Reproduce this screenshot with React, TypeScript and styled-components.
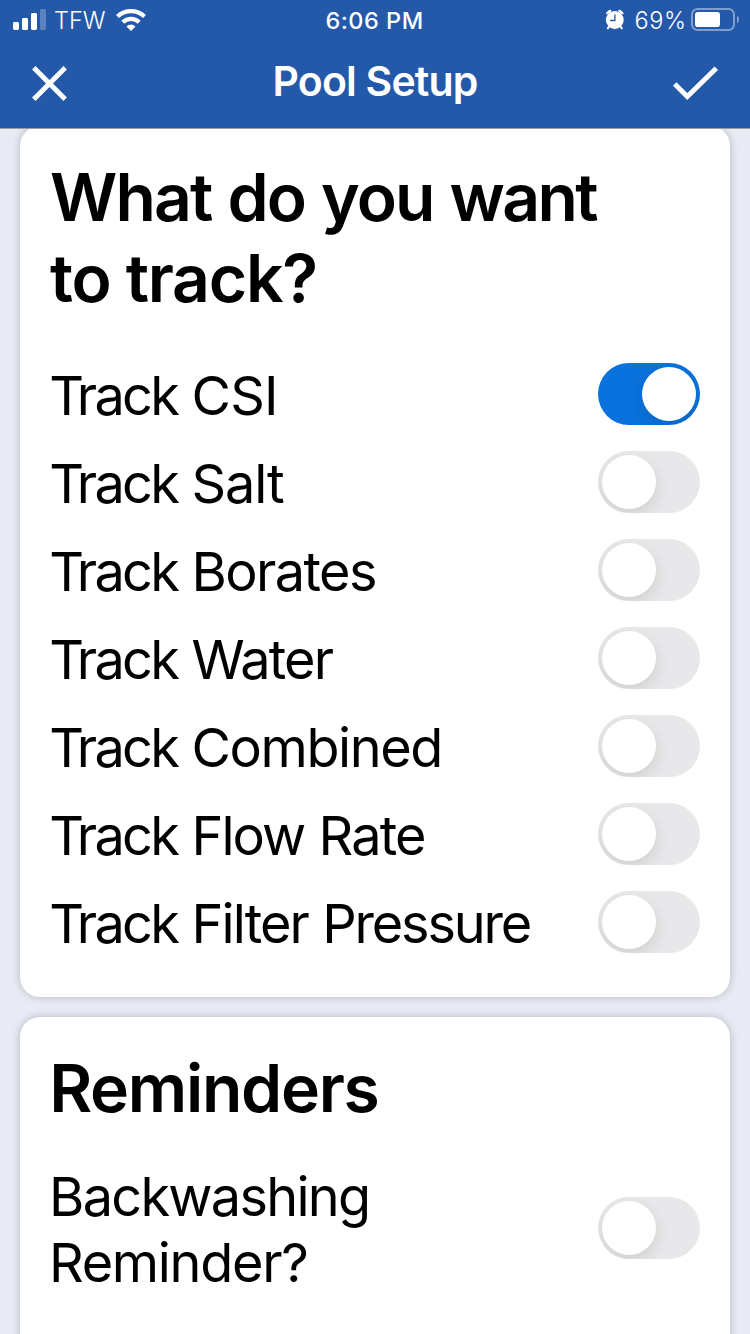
import React from 'react';
import styled, { createGlobalStyle } from 'styled-components';

const GlobalStyle = createGlobalStyle`
  * { box-sizing: border-box; }
  html, body { margin: 0; padding: 0; }
  body {
    background: #e8ebf4;
    font-family: Inter, "Liberation Sans", sans-serif;
    color: #000;
  }
`;

const Screen = styled.div`
  width: 750px;
  height: 1334px;
  overflow: hidden;
  display: flex;
  flex-direction: column;
  background: #e8ebf4;
`;

const Header = styled.header`
  flex: none;
  height: 129px;
  background: #2459aa;
  border-bottom: 1px solid #9a9da3;
  color: #fff;
`;

const StatusBar = styled.div`
  display: grid;
  grid-template-columns: 1fr auto 1fr;
  height: 40px;
  padding: 0 11px 0 13px;
`;

const StatusGroup = styled.div<{ $end?: boolean }>`
  display: flex;
  justify-content: ${(p) => (p.$end ? 'flex-end' : 'flex-start')};
  svg { display: block; flex: none; }
`;

const StatusText = styled.span<{ $weight?: number; $spacing?: number; $left?: number; $right?: number }>`
  font-size: 23.5px;
  line-height: 41px;
  font-weight: ${(p) => p.$weight ?? 360};
  letter-spacing: ${(p) => p.$spacing ?? 0}px;
  margin-left: ${(p) => p.$left ?? 0}px;
  margin-right: ${(p) => p.$right ?? 0}px;
  white-space: nowrap;
`;

const NavBar = styled.div`
  display: grid;
  grid-template-columns: 1fr auto 1fr;
  align-items: start;
  height: 88px;
  padding: 0 30px;
`;

const NavButton = styled.button<{ $end?: boolean }>`
  justify-self: ${(p) => (p.$end ? 'end' : 'start')};
  display: block;
  height: 88px;
  padding: 0;
  border: 0;
  background: none;
  svg { display: block; }
`;

const Title = styled.h1`
  margin: 0;
  font-size: 41px;
  line-height: 83px;
  font-weight: 600;
  letter-spacing: -0.8px;
  white-space: nowrap;
`;

const Content = styled.main`
  flex: 1;
  min-height: 0;
  overflow: hidden;
  padding: 0 20px;
`;

const Card = styled.section<{ $height: number; $offset?: number }>`
  height: ${(p) => p.$height}px;
  margin-top: ${(p) => p.$offset ?? 0}px;
  padding: 31px 30px 30px;
  border-radius: 20px;
  background: #fff;
  box-shadow: 0 0 8px rgba(0, 0, 0, 0.22);
`;

const Heading = styled.h2<{ $gap: number }>`
  margin: 0 0 ${(p) => p.$gap}px;
  font-size: 66px;
  line-height: 81px;
  font-weight: 600;
  white-space: nowrap;
`;

const HeadingLine = styled.span<{ $spacing: number; $wordSpacing?: number; $inset?: number }>`
  display: block;
  margin-left: ${(p) => p.$inset ?? 0}px;
  letter-spacing: ${(p) => p.$spacing}px;
  word-spacing: ${(p) => p.$wordSpacing ?? 0}px;
`;

const Row = styled.label<{ $tall?: boolean }>`
  display: flex;
  align-items: center;
  justify-content: space-between;
  height: ${(p) => (p.$tall ? 132 : 66)}px;
  margin-bottom: 22px;
`;

const Label = styled.span<{ $inset?: number }>`
  display: block;
  margin-left: ${(p) => p.$inset ?? 0}px;
  padding-top: 2px;
  font-size: 54px;
  line-height: 66px;
  font-weight: 400;
  letter-spacing: -0.8px;
  white-space: nowrap;
`;

const Word = styled.span<{ $spacing: number }>`
  letter-spacing: ${(p) => p.$spacing}px;
`;

const Track = styled.span<{ $on?: boolean }>`
  flex: none;
  display: flex;
  justify-content: ${(p) => (p.$on ? 'flex-end' : 'flex-start')};
  width: 102px;
  height: 62px;
  margin-bottom: 2px;
  padding: 4px;
  border-radius: 31px;
  overflow: hidden;
  background: ${(p) => (p.$on ? '#0a72dc' : '#e8e8ea')};
`;

const Knob = styled.span`
  width: 54px;
  height: 54px;
  border-radius: 50%;
  background: #fff;
  box-shadow: 0 6px 16px rgba(0, 0, 0, 0.11);
`;

const SignalIcon = () => (
  <svg width="34" height="40" viewBox="13 0 34 40" fill="#fff">
    <rect x="13" y="22" width="6" height="8" rx="1.4" />
    <rect x="22" y="18" width="6" height="12" rx="1.4" />
    <rect x="31" y="13" width="6" height="17" rx="1.4" />
    <rect x="40" y="9" width="6" height="21" rx="1.4" opacity="0.25" />
  </svg>
);

const WifiIcon = () => (
  <svg width="32" height="40" viewBox="114.5 0 32 40" fill="none" stroke="#fff" strokeWidth="4.3">
    <path d="M117 16.5A19.8 19.8 0 0 1 144 16.5" />
    <path d="M122.3 22.2A12 12 0 0 1 138.7 22.2" />
    <path d="M126 26.4A6.4 6.4 0 0 1 135 26.4L130.5 31Z" fill="#fff" stroke="none" />
  </svg>
);

const AlarmIcon = () => (
  <svg width="20" height="40" viewBox="605 0 20 40" fill="none" stroke="#fff" strokeLinecap="round">
    <circle cx="614.8" cy="20" r="8.9" fill="#fff" stroke="none" />
    <path d="M607.2 13.2A11.5 11.5 0 0 1 610.2 10.9M619.4 10.9A11.5 11.5 0 0 1 622.4 13.2" strokeWidth="2.4" />
    <path d="M609.2 26.4L607.8 28.3M620.4 26.4L621.8 28.3" strokeWidth="2" />
    <path d="M614.9 14.8V20.5H610.6" stroke="#2459aa" strokeWidth="1.3" />
  </svg>
);

const BatteryIcon = () => (
  <svg width="49" height="40" viewBox="690 0 49 40" fill="none">
    <rect x="692" y="9" width="42" height="21" rx="5.5" stroke="#fff" strokeOpacity="0.42" strokeWidth="2" />
    <rect x="695" y="12" width="25" height="15" rx="2.8" fill="#fff" />
    <path d="M737 15.8Q739 16.8 739 19.5T737 23.2Z" fill="#fff" fillOpacity="0.45" />
  </svg>
);

const CloseIcon = () => (
  <svg width="40" height="88" viewBox="30 40 40 88" fill="none" stroke="#fff" strokeWidth="4.9">
    <path d="M33.8 67.8L65.2 99.2M65.2 67.8L33.8 99.2" />
  </svg>
);

const CheckIcon = () => (
  <svg width="50" height="88" viewBox="670 40 50 88" fill="none" stroke="#fff" strokeWidth="4.9">
    <path d="M674.7 84L687.3 96.6L716.3 68.2" />
  </svg>
);

type Item = { words: [string, number][]; on?: boolean };

const trackItems: Item[] = [
  { words: [['CSI', -0.8]], on: true },
  { words: [['Salt', -1.1]] },
  { words: [['Borates', -1.6]] },
  { words: [['Water', -1.8]] },
  { words: [['Combined', -1.4]] },
  { words: [['Flow', -2], ['Rate', -1.8]] },
  { words: [['Filter', -1.9], ['Pressure', -2.2]] },
];

const Toggle = ({ on }: { on?: boolean }) => (
  <Track $on={on} role="switch" aria-checked={!!on}>
    <Knob />
  </Track>
);

export default function App() {
  return (
    <Screen>
      <GlobalStyle />
      <Header>
        <StatusBar>
          <StatusGroup>
            <SignalIcon />
            <StatusText $left={7} $right={10}>TFW</StatusText>
            <WifiIcon />
          </StatusGroup>
          <StatusText $weight={500} $spacing={0.5} $right={3}>6:06 PM</StatusText>
          <StatusGroup $end>
            <AlarmIcon />
            <StatusText $spacing={0.6} $left={9} $right={3.5}>69%</StatusText>
            <BatteryIcon />
          </StatusGroup>
        </StatusBar>
        <NavBar>
          <NavButton aria-label="Close"><CloseIcon /></NavButton>
          <Title>Pool Setup</Title>
          <NavButton $end aria-label="Save"><CheckIcon /></NavButton>
        </NavBar>
      </Header>
      <Content>
        <Card $height={871} $offset={-3}>
          <Heading $gap={43}>
            <HeadingLine $spacing={-1.85} $wordSpacing={1.1}>
              What do you <Word $spacing={-2.6}>want</Word>
            </HeadingLine>
            <HeadingLine $spacing={-1.25}>to track?</HeadingLine>
          </Heading>
          {trackItems.map((item) => (
            <Row key={item.words[0][0]}>
              <Label $inset={-0.7}>
                <Word $spacing={-7.4}>T</Word>
                <Word $spacing={-2.7}>rack</Word>
                {item.words.map(([text, spacing]) => (
                  <React.Fragment key={text}>
                    {' '}
                    <Word $spacing={spacing}>{text}</Word>
                  </React.Fragment>
                ))}
              </Label>
              <Toggle on={item.on} />
            </Row>
          ))}
        </Card>
        <Card $height={420} $offset={20}>
          <Heading $gap={34}>
            <HeadingLine $spacing={-1.3} $inset={-0.8}>Reminders</HeadingLine>
          </Heading>
          <Row $tall>
            <Label $inset={-1}>
              <Word $spacing={-1.7}>Backwashing</Word>
              <br />
              <Word $spacing={-1.3}>Reminder?</Word>
            </Label>
            <Toggle />
          </Row>
        </Card>
      </Content>
    </Screen>
  );
}
